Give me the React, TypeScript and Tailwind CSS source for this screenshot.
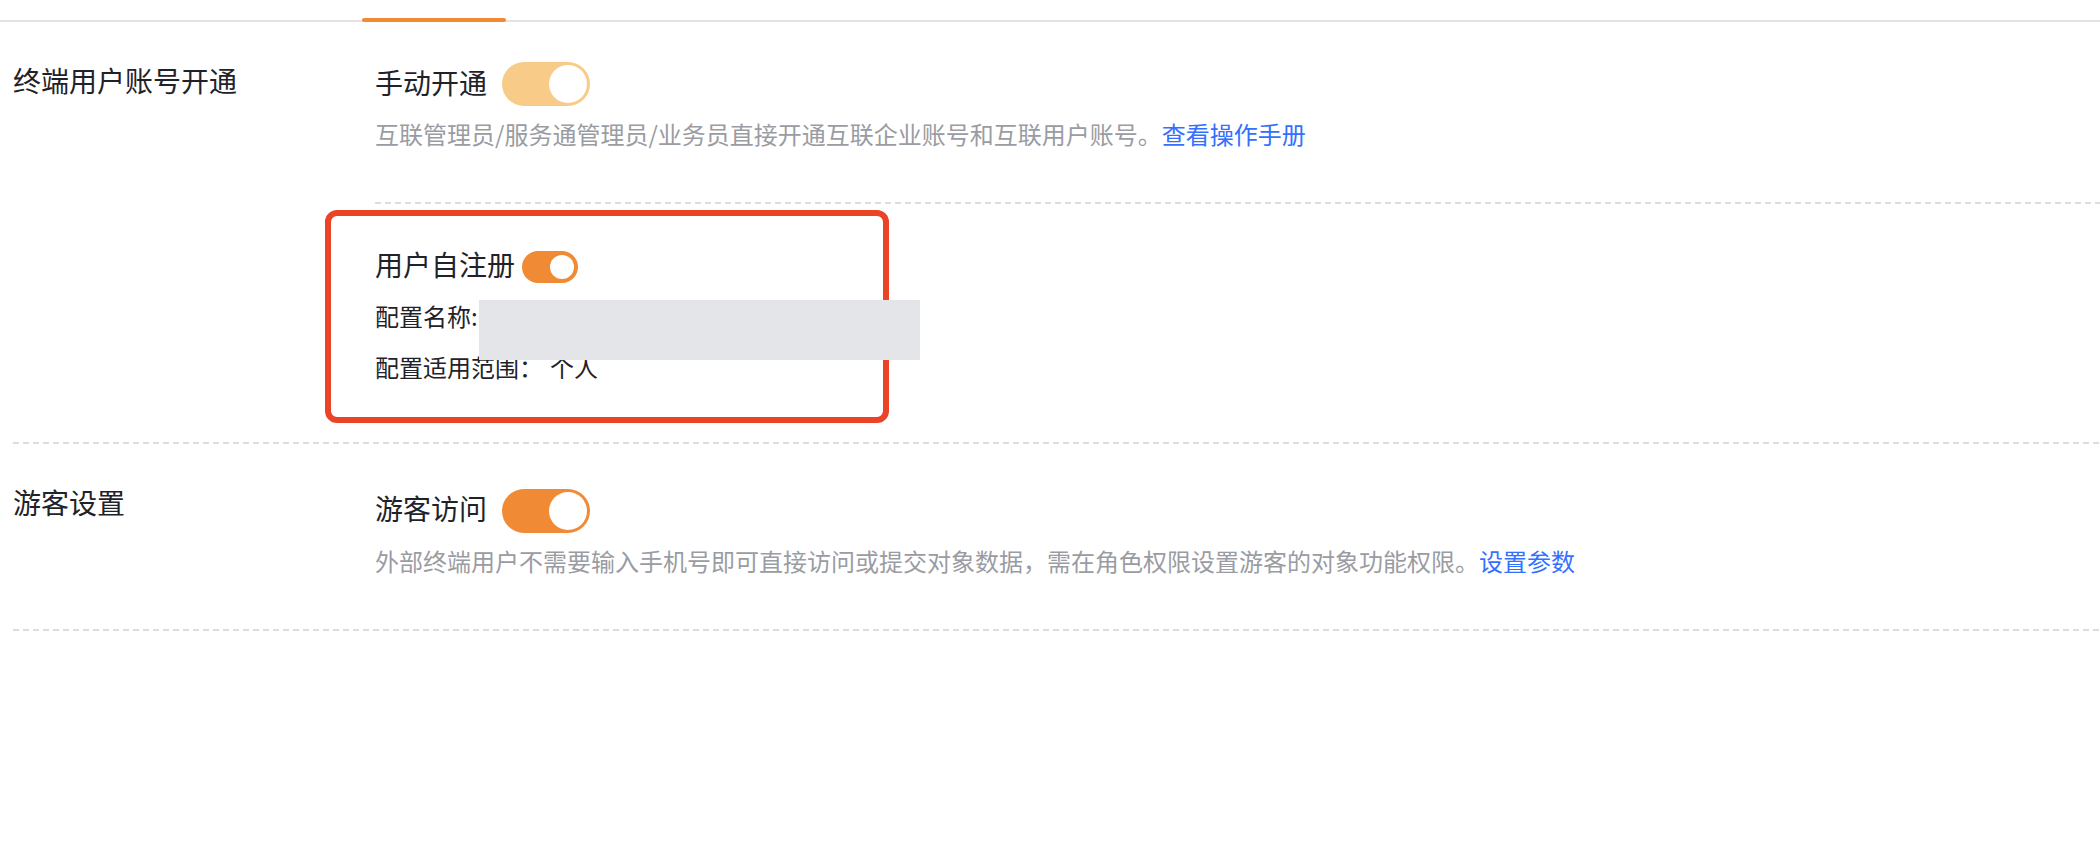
import React from 'react';

interface ToggleProps {
  size?: 'lg' | 'sm';
  tone?: 'light' | 'solid';
  className?: string;
}

const Toggle: React.FC<ToggleProps> = ({ size = 'lg', tone = 'solid', className = '' }) => {
  const track = tone === 'light' ? 'bg-[#f8cc88]' : 'bg-[#f08a35]';
  if (size === 'sm') {
    return (
      <span className={`flex h-[32px] w-[56px] shrink-0 items-center justify-end rounded-full p-[4px] ${track} ${className}`}>
        <span className="h-[24px] w-[24px] rounded-full bg-white" />
      </span>
    );
  }
  return (
    <span className={`flex h-[44px] w-[88px] shrink-0 items-center justify-end rounded-full p-[3px] ${track} ${className}`}>
      <span className="h-[38px] w-[38px] rounded-full bg-white" />
    </span>
  );
};

const Dashed: React.FC<{ className?: string }> = ({ className = '' }) => (
  <div className={`h-[2px] bg-[repeating-linear-gradient(90deg,#dcdde2_0_6px,transparent_6px_10px)] ${className}`} />
);

export default function App() {
  return (
    <div className="h-[850px] w-[2100px] bg-white font-['Noto_Sans_CJK_SC','Noto_Sans',sans-serif] text-[#1f2329]">
      {/* Tab strip */}
      <div className="relative h-[22px] border-b-2 border-[#e2e2e7]">
        <div className="absolute bottom-[-2px] left-[362px] h-[4px] w-[144px] rounded-full bg-[#f08a35]" />
      </div>

      {/* 终端用户账号开通 */}
      <div className="flex pb-[19px]">
        <div className="w-[375px] shrink-0 pl-[13px] pt-[38px] text-[28px] leading-[40px]">终端用户账号开通</div>
        <div className="flex-1 pt-[40px]">
          <div className="flex items-start gap-[15px]">
            <span className="text-[28px] leading-[40px]">手动开通</span>
            <Toggle tone="light" />
          </div>
          <p className="mt-[10px] text-[24px] leading-[36px] text-[#9a9ca3]">
            互联管理员/服务通管理员/业务员直接开通互联企业账号和互联用户账号。
            <span className="text-[#3370ff]">查看操作手册</span>
          </p>
          <Dashed className="mt-[50px]" />

          <div className="-ml-[50px] mt-[6px] w-[564px] rounded-[12px] border-[6px] border-[#ea4326] pb-[32px] pl-[44px] pt-[28px]">
            <div className="flex items-start gap-[7px]">
              <span className="text-[28px] leading-[40px]">用户自注册</span>
              <Toggle size="sm" className="mt-[7px]" />
            </div>
            <div className="relative mt-[14px] text-[24px] leading-[36px]">
              <span>配置名称:</span>
              <div className="absolute left-[104px] top-[2px] h-[60px] w-[441px] bg-[#e4e5e9]" />
            </div>
            <div className="mt-[15px] text-[24px] leading-[36px]">
              配置适用范围：<span className="ml-[7px]">个人</span>
            </div>
          </div>
        </div>
      </div>
      <Dashed className="ml-[13px]" />

      {/* 游客设置 */}
      <div className="flex pb-[50px]">
        <div className="w-[375px] shrink-0 pl-[13px] pt-[38px] text-[28px] leading-[40px]">游客设置</div>
        <div className="flex-1 pt-[44px]">
          <div className="flex items-start gap-[15px]">
            <span className="text-[28px] leading-[40px]">游客访问</span>
            <Toggle className="mt-[1px]" />
          </div>
          <p className="mt-[10px] text-[24px] leading-[36px] text-[#9a9ca3]">
            外部终端用户不需要输入手机号即可直接访问或提交对象数据，需在角色权限设置游客的对象功能权限。
            <span className="text-[#3370ff]">设置参数</span>
          </p>
        </div>
      </div>
      <Dashed className="ml-[13px]" />
    </div>
  );
}
